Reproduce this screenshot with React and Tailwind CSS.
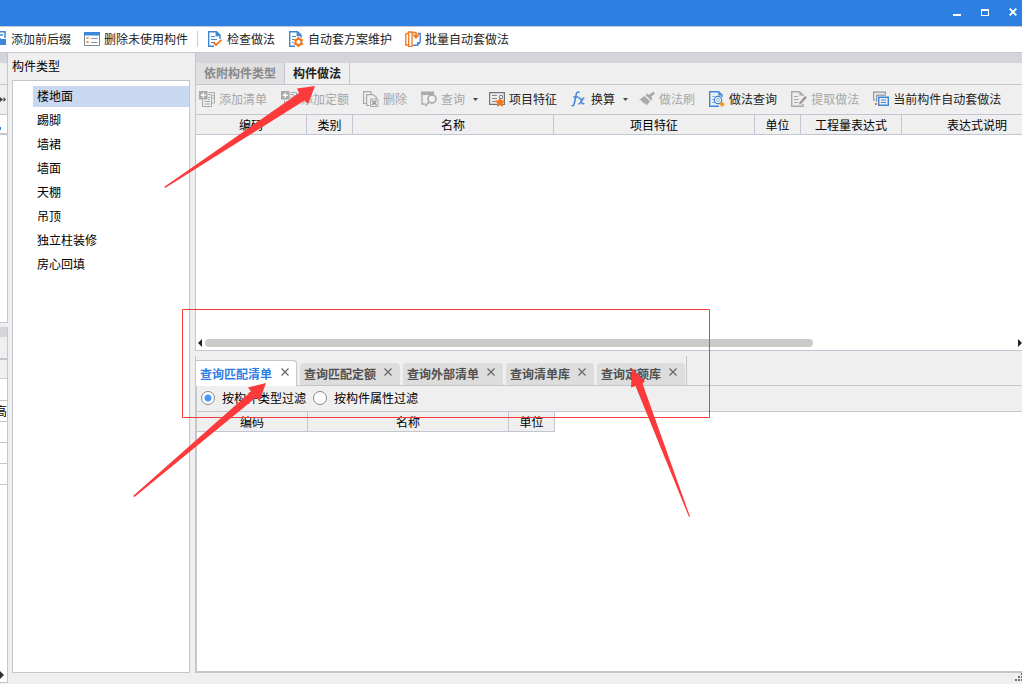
import React, { useState } from "react";

const BLUE = "#3f87d6";
const ORANGE = "#f0761f";
const GRAY = "#a9a9a9";

function Icon({ children, className = "" }) {
  return (
    <svg className={`h-4 w-4 shrink-0 ${className}`} viewBox="0 0 16 16" fill="none" aria-hidden="true">
      {children}
    </svg>
  );
}

function PageOutline({ color }) {
  return (
    <g stroke={color} strokeWidth="1.4">
      <path d="M13 8V4L9.500 .7H1.700V15.300H7" />
      <path d="M9.300 1V4.500H13" fill={color} />
      <path d="M4 5.500H8M4 8.500H10M4 11.500H8" strokeWidth="1" />
    </g>
  );
}

const PrefixIcon = () => (
  <Icon>
    <path d="M4 .7H14V7M4 4H12M4 8H10" stroke={BLUE} strokeWidth="1.500" />
    <path d="M8 8H15V14H8Z" fill={BLUE} />
    <path d="M2 13H6" stroke={BLUE} strokeWidth="1.500" />
  </Icon>
);

const UnusedIcon = () => (
  <Icon>
    <path d="M.5 1.500H15.500V14.500H.5Z" stroke="#7d8a99" fill="#fff" />
    <path d="M0 1H16V4.500H0Z" fill={BLUE} />
    <path d="M2.500 6l2 2m0-2l-2 2M2.500 10l2 2m0-2l-2 2" stroke={ORANGE} />
    <path d="M7 7.500H13.500M7 11.500H13.500" stroke="#8b95a1" />
  </Icon>
);

const CheckIcon = () => (
  <Icon>
    <PageOutline color={BLUE} />
    <path d="M6.500 11.500L9 14L14.500 8.800" stroke={ORANGE} strokeWidth="1.800" />
  </Icon>
);

const GearIcon = () => (
  <Icon>
    <PageOutline color={BLUE} />
    <circle cx="10.500" cy="11" r="5" fill="#fff" />
    <circle cx="10.500" cy="11" r="3" stroke={ORANGE} strokeWidth="1.900" />
    <path d="M10.500 6V8M10.500 14V16M6.200 8.500L8 9.500M13 12.500L14.800 13.500M6.200 13.500L8 12.500M13 9.500L14.800 8.500" stroke={ORANGE} strokeWidth="1.900" />
  </Icon>
);

const BatchIcon = () => (
  <Icon>
    <path d="M.8 2.500H4M.8 2.500V14H3M3.700 1H7V15.300H3.700Z" stroke={ORANGE} strokeWidth="1.300" />
    <path d="M12.500 2.500H15.200V11L12.500 14.200H8" stroke={BLUE} strokeWidth="1.400" />
    <path d="M7 1.500H11V6M8.200 3.500L11 6.800L13.800 3.500" stroke={ORANGE} strokeWidth="1.500" />
    <path d="M12 14V11H15Z" fill={BLUE} />
  </Icon>
);

const AddIcon = () => (
  <Icon>
    <path d="M9.500 1.500H15.500V12H13" stroke={GRAY} />
    <path d="M3.500 9V15.500H12.500V3.500H9" stroke={GRAY} />
    <path d="M9 6.500H11M9 8.500H11M5.500 10.500H11M5.500 13H11M13.500 4.500H15M13.500 7H15" stroke={GRAY} />
    <path d="M0 0H8.500V8.500H0Z" fill={GRAY} />
    <path d="M4.250 1.800V6.800M1.800 4.250H6.800" stroke="#fff" strokeWidth="1.400" />
  </Icon>
);

const DeleteIcon = () => (
  <Icon>
    <path d="M3 12.500H.6V.6H8V3" stroke={GRAY} strokeWidth="1.200" />
    <path d="M10.500 3.600H3.600V14.500H6.500M10.500 3.600L13.500 6.500V8" stroke={GRAY} strokeWidth="1.200" />
    <path d="M7.500 8H15V15.500H7.500Z" fill="#efefef" stroke={GRAY} />
    <path d="M9 9.500L13.500 14M13.500 9.500L9 14" stroke="#999" strokeWidth="1.700" />
  </Icon>
);

const QueryIcon = () => (
  <Icon>
    <path d="M0 .5H13V4H0Z" fill={GRAY} />
    <path d="M1 4V13H4" stroke={GRAY} strokeWidth="1.300" />
    <circle cx="11" cy="8" r="4" fill="#efefef" stroke={GRAY} strokeWidth="1.600" />
    <path d="M8 11L4.300 15" stroke={GRAY} strokeWidth="1.800" />
  </Icon>
);

const FeatureIcon = () => (
  <Icon>
    <path d="M.6 1.600H15.400V13.400H.6Z" stroke="#6d7680" strokeWidth="1.200" />
    <path d="M3 4.500H8M3 7.500H8M3 10.500H7M10.500 4.500H13.500V7.500H10.500Z" stroke="#7d8790" />
    <path d="M11 6.200L12.500 9.300L16 9.800L13.500 12.200L14 15.800L11 14.200L7.900 15.800L8.500 12.200L6 9.800L9.500 9.300Z" fill={ORANGE} />
  </Icon>
);

const FxIcon = () => (
  <Icon>
    <path d="M8.500 1.500C7 .2 5.600 1.400 5.200 3.300L3.300 12.500C2.900 14.500 1.500 15.200 .5 14.500M2.300 6H7.500" stroke={BLUE} strokeWidth="1.500" />
    <path d="M7.500 7.500C9 6.200 9.800 7.500 10.200 9.500C10.700 12.500 11.500 13.800 13.300 12.300M13.300 6.800C11.500 7 9.800 12.800 7.300 13" stroke={BLUE} strokeWidth="1.400" />
  </Icon>
);

const BrushIcon = () => (
  <Icon>
    <path d="M14.500 .6L16 2.300L12.300 6L13.600 8L12 9.500L6.500 4L8 2.500L10.200 3.800Z" fill="#aaa" />
    <path d="M5.500 5L11 10.500L7.500 14.500L6.500 12L5 13.500L4.500 11L2.500 11.500L3 9.500L0 9Z" fill="#aaa" />
  </Icon>
);

const SearchPageIcon = () => (
  <Icon>
    <path d="M13 6V4L9.500 .7H.7V15.300H10" stroke={BLUE} strokeWidth="1.400" />
    <path d="M9.300 1V4.500H13" fill={BLUE} />
    <path d="M3 5.500H6M3 8.500H5M3 11.500H6" stroke="#8fb5e2" />
    <circle cx="9" cy="9" r="3.700" fill="#efefef" stroke={BLUE} strokeWidth="1.200" />
    <circle cx="9" cy="9" r="1.500" stroke="#9abce4" />
    <path d="M12.800 10.500L16 13.200L13 16L10.300 13.200Z" fill="#f69a1c" />
  </Icon>
);

const ExtractIcon = () => (
  <Icon>
    <path d="M12 5V4L8.500 .7H.7V15.300H12V13" stroke={GRAY} strokeWidth="1.400" />
    <path d="M8.300 1V4.500H12" fill={GRAY} />
    <path d="M3 5.500H7M3 8.500H8M3 11.500H7" stroke={GRAY} />
    <path d="M14 4.500L16.200 6.700L10.200 13.200L7.700 14L8.200 11.200Z" fill="#999" stroke="#efefef" strokeWidth=".6" />
  </Icon>
);

const CurrentIcon = () => (
  <Icon>
    <path d="M2.500 9H.6V1.100H12.400V3" stroke="#8c969f" strokeWidth="1.200" />
    <path d="M3.600 11V4.100H13" stroke="#8c969f" strokeWidth="1.200" />
    <path d="M5.700 6.200H15.300V14.300H5.700Z" fill="#efefef" stroke={BLUE} strokeWidth="1.400" />
    <path d="M8 9H13M8 11.500H13" stroke={BLUE} strokeWidth="1.200" />
    <path d="M2 12H4V14H2Z" fill={ORANGE} />
  </Icon>
);

const topActions = [
  { label: "添加前后缀", icon: PrefixIcon },
  { label: "删除未使用构件", icon: UnusedIcon },
  { label: "检查做法", icon: CheckIcon, divided: true },
  { label: "自动套方案维护", icon: GearIcon },
  { label: "批量自动套做法", icon: BatchIcon },
];

const methodActions = [
  { label: "添加清单", icon: AddIcon, disabled: true },
  { label: "添加定额", icon: AddIcon, disabled: true },
  { label: "删除", icon: DeleteIcon, disabled: true },
  { label: "查询", icon: QueryIcon, disabled: true, menu: true },
  { label: "项目特征", icon: FeatureIcon },
  { label: "换算", icon: FxIcon, menu: true },
  { label: "做法刷", icon: BrushIcon, disabled: true },
  { label: "做法查询", icon: SearchPageIcon },
  { label: "提取做法", icon: ExtractIcon, disabled: true },
  { label: "当前构件自动套做法", icon: CurrentIcon },
];

const componentTypes = ["楼地面", "踢脚", "墙裙", "墙面", "天棚", "吊顶", "独立柱装修", "房心回填"];
const queryTabs = ["查询匹配清单", "查询匹配定额", "查询外部清单", "查询清单库", "查询定额库"];

function TitleBar() {
  return (
    <header className="flex h-[27px] shrink-0 items-center justify-end border-b border-[#c3c8d2] bg-[#2d80e2] pb-0.5 text-white">
      <button aria-label="最小化" className="flex h-6 w-7 items-center justify-center">
        <svg className="h-2 w-2" viewBox="0 0 8 8"><path d="M0 6H8V8H0Z" fill="currentColor" /></svg>
      </button>
      <button aria-label="最大化" className="flex h-6 w-7 items-center justify-center">
        <svg className="h-2 w-2" viewBox="0 0 8 8"><path fillRule="evenodd" d="M0 1H8V8H0ZM1 3V7H7V3Z" fill="currentColor" /></svg>
      </button>
      <button aria-label="关闭" className="-mr-[5px] flex h-6 w-7 items-center justify-center">
        <svg className="h-2 w-2" viewBox="0 0 8 8"><path d="M.7 .7L7.300 7.300M7.300 .7L.7 7.300" stroke="currentColor" strokeWidth="1.900" /></svg>
      </button>
    </header>
  );
}

function TopToolbar() {
  return (
    <nav className="flex h-[26px] shrink-0 items-center overflow-hidden border-b border-[#c3c8d2] bg-white pb-px">
      <div className="-ml-[9px] flex items-center gap-[13px]">
        {topActions.map(({ label, icon: Glyph, divided }) => (
          <React.Fragment key={label}>
            {divided && <span className="-mx-1 h-4 w-px bg-[#cccccc]" />}
            <button className="flex shrink-0 items-center gap-1 whitespace-nowrap text-[#222]">
              <Glyph />
              {label}
            </button>
          </React.Fragment>
        ))}
      </div>
    </nav>
  );
}

function NeighbourPanels() {
  return (
    <div className="flex w-2 shrink-0 flex-col overflow-hidden">
      <section className="flex h-[270px] shrink-0 flex-col border-r border-b border-[#c3c6cc] bg-white">
        <div className="h-[10px] bg-[#d3d5da]" />
        <div className="h-[22px] border-b border-[#c3c6cc] bg-[#efefef]" />
        <div className="flex h-[30px] items-center border-b border-[#c3c6cc] bg-[#efefef]">
          <svg className="h-[5px] w-[6px]" viewBox="0 0 6 5"><path d="M0 0L3 2.500L0 5ZM3.500 0L6 2.500L3.500 5Z" fill="#444" /></svg>
        </div>
        <div className="flex h-5 items-center border-b-2 border-[#c3c6cc]">
          <span className="mt-2 h-[3px] w-px bg-[#2d80e2]" />
        </div>
      </section>
      <section className="mt-1 mb-px flex flex-1 flex-col border-r border-b border-[#c3c6cc] bg-white">
        <div className="h-[10px] bg-[#d3d5da]" />
        <div className="h-[23px] border-b-2 border-[#c3c6cc] bg-[#efefef]" />
        <div className="h-[19px] border-b border-[#d0d0d0] bg-[#efefef]" />
        <div className="h-[22px] border-b border-[#c3c6cc]" />
        <div className="flex h-[21px] items-center justify-end border-b border-[#c3c6cc]">高</div>
        <div className="h-[21px] border-b border-[#c3c6cc]" />
        <div className="h-[21px] border-b border-[#c3c6cc]" />
        <div className="h-[21px] border-b border-[#c3c6cc]" />
        <div className="flex flex-1 items-end pb-[3px]">
          <svg className="h-2 w-1" viewBox="0 0 4 8"><path d="M0 0L4 4L0 8Z" fill="#333" /></svg>
        </div>
      </section>
    </div>
  );
}

function TypeSidebar() {
  const [selected, setSelected] = useState(0);
  return (
    <aside className="ml-1 flex w-[178px] shrink-0 flex-col pb-[11px]">
      <h2 className="flex h-[27px] items-center pb-0.5">构件类型</h2>
      <ul className="flex flex-1 flex-col gap-[3px] border border-[#c3c6cc] bg-white pt-[5px] pl-5">
        {componentTypes.map((name, i) => (
          <li key={name} className="flex">
            <button
              onClick={() => setSelected(i)}
              className={`h-[21px] flex-1 pb-0.5 pl-1 text-left ${i === selected ? "bg-[#c8d8f0]" : ""}`}
            >
              {name}
            </button>
          </li>
        ))}
      </ul>
    </aside>
  );
}

function MethodToolbar() {
  return (
    <div className="flex h-[30px] shrink-0 items-center gap-[14px] border-b border-[#c3c6d2] pb-0.5 pl-[3px]">
      {methodActions.map(({ label, icon: Glyph, disabled, menu }) => (
        <button
          key={label}
          disabled={disabled}
          className={`flex shrink-0 items-center gap-1 whitespace-nowrap ${disabled ? "text-[#a6a6a6]" : "text-[#222]"}`}
        >
          <Glyph />
          {label}
          {menu && (
            <svg className="h-3 w-[6px]" viewBox="0 0 6 12" overflow="visible">
              <path d="M4 5H9L6.500 8Z" fill="#444" />
            </svg>
          )}
        </button>
      ))}
    </div>
  );
}

function HeaderCell({ children }) {
  return <th className="h-[20px] border-r border-b border-[#c3c6d2] bg-[#efefef] p-0 text-center font-normal">{children}</th>;
}

function MethodPane() {
  return (
    <section className="flex h-[298px] shrink-0 flex-col overflow-hidden border-b border-l border-[#c3c6d2]">
      <div className="h-[10px] shrink-0 bg-[#d3d5da]" />
      <div role="tablist" className="flex h-[22px] shrink-0 border-b border-[#c3c6d2] font-bold">
        <button role="tab" aria-selected="false" className="border-r border-[#c3c6d2] bg-[#e0e0e0] px-2 pb-0.5 text-[#888]">
          依附构件类型
        </button>
        <button role="tab" aria-selected="true" className="border-r border-[#c3c6d2] px-2 pb-0.5 text-[#222]">
          构件做法
        </button>
      </div>
      <MethodToolbar />
      <div className="flex-1 overflow-hidden bg-white">
        <table className="w-[857px] table-fixed border-separate border-spacing-0">
          <colgroup>
            <col className="w-[111px]" />
            <col className="w-[46px]" />
            <col className="w-[201px]" />
            <col className="w-[201px]" />
            <col className="w-[46px]" />
            <col className="w-[101px]" />
            <col className="w-[151px]" />
          </colgroup>
          <thead>
            <tr>
              {["编码", "类别", "名称", "项目特征", "单位", "工程量表达式", "表达式说明"].map((h) => (
                <HeaderCell key={h}>{h}</HeaderCell>
              ))}
            </tr>
          </thead>
        </table>
      </div>
      <div className="flex h-[15px] shrink-0 items-center gap-[3px] bg-white pl-0.5">
        <svg className="h-2 w-1 shrink-0" viewBox="0 0 4 8"><path d="M4 0V8L0 4Z" fill="#222" /></svg>
        <div className="flex-1">
          <div className="h-2 w-3/4 rounded-full bg-[#cbcbcb]" />
        </div>
        <svg className="h-2 w-1 shrink-0" viewBox="0 0 4 8"><path d="M0 0L4 4L0 8Z" fill="#222" /></svg>
      </div>
    </section>
  );
}

function QueryTab({ label, active, onSelect }) {
  return (
    <div
      className={
        active
          ? "-mb-px flex h-[26px] items-center gap-[9px] rounded-tr border-t border-r border-[#c3c6cc] bg-white pr-[7px] pl-1 text-[#2d80e2]"
          : "flex h-[22px] items-center gap-2 rounded-t bg-[#dddddd] pr-[8px] pl-1 text-[#505050]"
      }
    >
      <button role="tab" aria-selected={active} onClick={onSelect} className="font-bold whitespace-nowrap">
        {label}
      </button>
      <button aria-label={`关闭${label}`} className="mb-1">
        <svg className="h-2 w-2" viewBox="0 0 8 8"><path d="M.5 .5L7.500 7.500M7.500 .5L.5 7.500" stroke="#666" strokeWidth="1.200" /></svg>
      </button>
    </div>
  );
}

function QueryPane() {
  const [tab, setTab] = useState(0);
  return (
    <section className="flex flex-1 flex-col pt-[5px]">
      <div className="flex h-[30px] shrink-0 border-b border-[#c3c6cc]">
        <div role="tablist" className="flex h-[30px] items-end gap-[3px] border-r border-l border-[#c3c6cc] pr-px pb-px">
          {queryTabs.map((t, i) => (
            <QueryTab key={t} label={t} active={i === tab} onSelect={() => setTab(i)} />
          ))}
        </div>
      </div>
      <div className="flex flex-1 flex-col border-b-2 border-l-2 border-[#c3c6cc] bg-white">
        <div className="flex h-[26px] shrink-0 items-center gap-[7px] border-b border-[#c3c6cc] bg-[#efefef] pb-px pl-1">
          {["按构件类型过滤", "按构件属性过滤"].map((label, i) => (
            <label key={label} className="flex items-center gap-[7px]">
              <input
                type="radio"
                name="filter"
                defaultChecked={i === 0}
                className="h-[14px] w-[14px] appearance-none rounded-full border border-[#888] bg-white checked:bg-[radial-gradient(circle,#4a98f7_0_3px,#fff_4px)]"
              />
              {label}
            </label>
          ))}
        </div>
        <table className="w-[358px] table-fixed border-separate border-spacing-0">
          <colgroup>
            <col className="w-[111px]" />
            <col className="w-[201px]" />
            <col className="w-[46px]" />
          </colgroup>
          <thead>
            <tr>
              {["编码", "名称", "单位"].map((h) => (
                <HeaderCell key={h}>{h}</HeaderCell>
              ))}
            </tr>
          </thead>
        </table>
      </div>
      <div className="flex h-[11px] shrink-0 justify-end">
        <svg className="h-[9px] w-[7px]" viewBox="0 0 7 9">
          <path d="M6 0H8V2H6ZM3 3H5V5H3ZM6 3H8V5H6ZM0 6H2V8H0ZM3 6H5V8H3ZM6 6H8V8H6Z" fill="#6d7078" />
        </svg>
      </div>
    </section>
  );
}

function Annotations() {
  return (
    <svg className="pointer-events-none absolute top-0 left-0 h-[684px] w-[1022px]" viewBox="0 0 1022 684" aria-hidden="true">
      <path d="M182.500 309.500H709.500V417.500H182.500Z" fill="none" stroke="#f93a3a" />
      <g fill="#fb3b3b">
        <path d="M315 86L297 88.500L299 93L164 187L165.500 187.800L304.500 100.500L308 104Z" />
        <path d="M266 383L248 387.500L251 391.500L133 496L134.500 497L256 397.500L259.500 401Z" />
        <path d="M632 368.500L631 387.500L635.500 386L689 517L690 516.500L642.500 383.500L645 381Z" />
      </g>
    </svg>
  );
}

export default function App() {
  return (
    <div className="relative flex min-h-screen flex-col overflow-hidden bg-[#efefef] font-['Noto_Sans_CJK_SC',sans-serif] text-[12px] leading-4 text-black">
      <TitleBar />
      <TopToolbar />
      <div className="flex flex-1">
        <NeighbourPanels />
        <TypeSidebar />
        <main className="ml-[5px] flex min-w-0 flex-1 flex-col">
          <MethodPane />
          <QueryPane />
        </main>
      </div>
      <Annotations />
    </div>
  );
}
